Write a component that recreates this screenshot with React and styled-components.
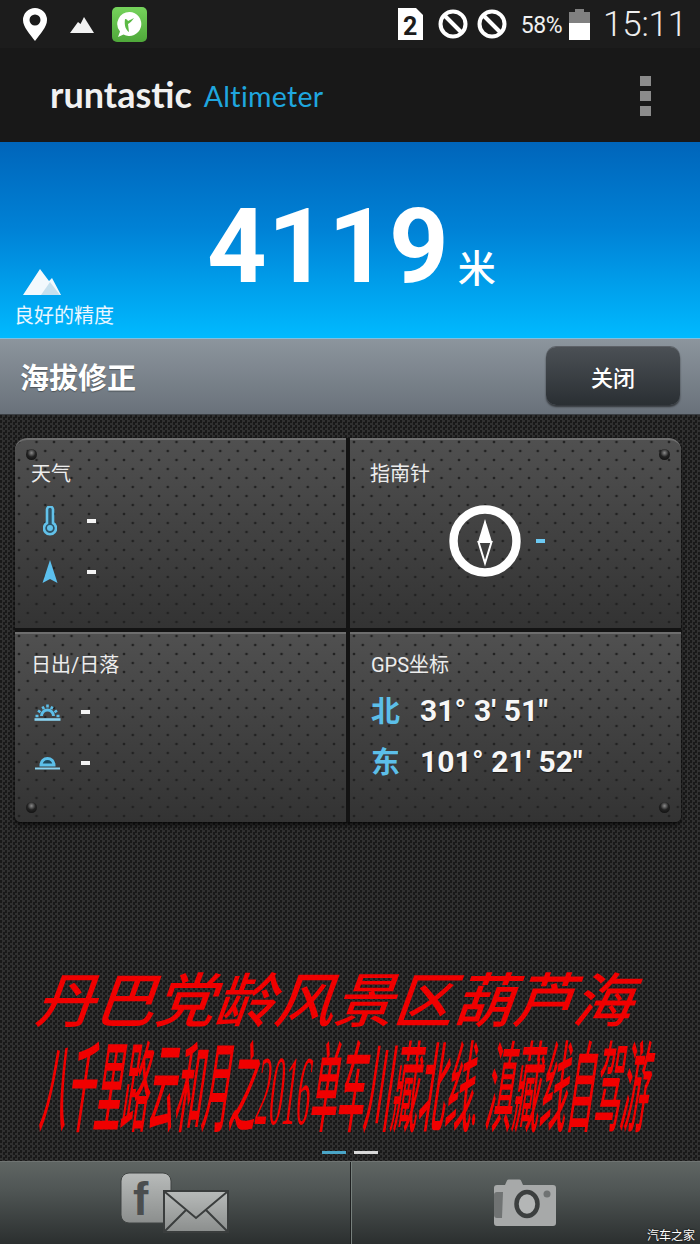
import React from "react";
import styled, { createGlobalStyle } from "styled-components";

const cjk = `"Noto Sans CJK SC", sans-serif`;
const roboto = `Roboto, "Noto Sans CJK SC", sans-serif`;

const GlobalStyle = createGlobalStyle`
  html, body {
    margin: 0;
    padding: 0;
    background: #1a1a1a;
  }
  * {
    box-sizing: border-box;
  }
`;

const Screen = styled.div`
  position: relative;
  width: 700px;
  height: 1244px;
  overflow: hidden;
  display: flex;
  flex-direction: column;
  font-family: ${roboto};
  color: #fff;
`;

/* status bar */
const StatusBar = styled.div`
  height: 48px;
  flex: 0 0 48px;
  background: #1c1c1c;
  display: flex;
  align-items: center;
  padding: 0 13px 0 23px;
`;

const StatusLeft = styled.div`
  display: flex;
  align-items: center;
  flex: 1;
`;

const AppBadge = styled.div`
  width: 35px;
  height: 35px;
  margin: 0 0 0 18px;
  border-radius: 5px;
  background: linear-gradient(#76d35c, #4fa83a);
  display: flex;
  align-items: center;
  justify-content: center;
`;

const Percent = styled.span`
  font-size: 23px;
  letter-spacing: -0.5px;
  margin: 2px 7px 0 14px;
  color: #f0f0f0;
`;

const Clock = styled.span`
  font-size: 35px;
  font-weight: 300;
  margin-left: 13px;
  letter-spacing: -0.2px;
  color: #eee;
`;

const SlashIcon = styled.svg`
  margin-left: ${(p) => p.$gap}px;
`;

/* app bar */
const AppBar = styled.div`
  height: 94px;
  flex: 0 0 94px;
  background: #181818;
  display: flex;
  align-items: center;
  padding: 0 49px 0 50px;
`;

const LogoMain = styled.span`
  font-family: Lato, sans-serif;
  font-weight: 700;
  font-size: 36px;
  letter-spacing: 0;
  color: #f1f1f1;
  line-height: 1;
  margin-top: -2px;
`;

const LogoSub = styled.span`
  font-family: Lato, sans-serif;
  font-weight: 400;
  font-size: 28.5px;
  letter-spacing: 0.3px;
  color: #1fa6df;
  line-height: 1;
  margin: 2px auto 0 12px;
`;

const MenuDots = styled.div`
  display: flex;
  flex-direction: column;
  gap: 5px;
  margin-top: 1px;
`;

const MenuDot = styled.span`
  width: 11px;
  height: 10px;
  background: #8b8b8b;
`;

/* altitude hero */
const Hero = styled.div`
  height: 196px;
  flex: 0 0 196px;
  background: linear-gradient(#0065ba 0%, #0082d6 45%, #00baff 100%);
  display: flex;
  align-items: flex-end;
  padding: 0 0 0 14px;
`;

const Accuracy = styled.div`
  width: 193px;
  display: flex;
  flex-direction: column;
  padding-bottom: 8px;
`;

const AccuracyText = styled.span`
  font-family: ${cjk};
  font-size: 20px;
  line-height: 30px;
  margin-top: 5px;
  color: #e9f6ff;
`;

const Altitude = styled.div`
  display: flex;
  align-items: baseline;
  align-self: flex-start;
  margin-top: 45px;
`;

const AltitudeValue = styled.span`
  font-size: 104px;
  font-weight: 700;
  letter-spacing: 1px;
  line-height: 120px;
`;

const AltitudeUnit = styled.span`
  font-family: ${cjk};
  font-size: 38px;
  font-weight: 500;
  line-height: 1;
  margin-left: 8px;
`;

/* correction bar */
const CorrectionBar = styled.div`
  height: 77px;
  flex: 0 0 77px;
  border-top: 1px solid #7fc0e0;
  border-bottom: 1px solid #3b3f44;
  background: linear-gradient(#8c959d, #69717a);
  display: flex;
  align-items: center;
  justify-content: space-between;
  padding: 0 20px 2px 20px;
`;

const CorrectionTitle = styled.h2`
  margin: 0;
  font-family: ${cjk};
  font-size: 29px;
  font-weight: 700;
  color: #fff;
  text-shadow: 0 1px 1px rgba(0, 0, 0, 0.35);
`;

const CloseButton = styled.div`
  width: 134px;
  height: 58px;
  border-radius: 10px;
  background: linear-gradient(#4b5055, #2a2f33);
  box-shadow: 0 -1px 0 #5d6167, 0 2px 2px rgba(0, 0, 0, 0.55);
  display: flex;
  align-items: center;
  justify-content: center;
  font-family: ${cjk};
  font-size: 22px;
  font-weight: 500;
`;

/* carbon area */
const Carbon = styled.div`
  flex: 1;
  display: flex;
  flex-direction: column;
  align-items: stretch;
  padding: 23px 19px 0 15px;
  background-color: #222;
  background-image: repeating-conic-gradient(#303030 0 25%, #191919 0 50%);
  background-size: 5px 5px;
`;

const PanelGrid = styled.div`
  display: grid;
  grid-template-columns: 331px 331px;
  grid-template-rows: 190px 190px;
  gap: 4px;
  background: #131313;
  border-radius: 12px 12px 6px 6px;
  box-shadow: 0 3px 5px rgba(0, 0, 0, 0.7);
`;

const Panel = styled.div`
  position: relative;
  padding: ${(p) => p.$top}px 0 0 ${(p) => p.$left}px;
  border-top: 2px solid #6e6e6e;
  border-radius: ${(p) => p.$radius};
  background-color: #3c3c3c;
  background-image:
    radial-gradient(circle, #222 1px, transparent 1.7px),
    radial-gradient(circle, #222 1px, transparent 1.7px),
    linear-gradient(#505050, #414141 50%, #333);
  background-size: 17.5px 18px, 17.5px 18px, 100% 100%;
  background-position: 4px 2px, 12.75px 11px, 0 0;
`;

const PanelTitle = styled.div`
  font-size: 20px;
  line-height: 28px;
  color: #ededed;
`;

const Screw = styled.span`
  position: absolute;
  width: 11px;
  height: 11px;
  border-radius: 50%;
  background: radial-gradient(circle at 50% 35%, #8a8a8a 0, #222 45%, #0a0a0a 100%);
  ${(p) => p.$side}: 11px;
  ${(p) => p.$edge}: 9px;
`;

const MetricRow = styled.div`
  height: 51px;
  display: flex;
  align-items: center;
  margin-top: ${(p) => p.$top || 0}px;
`;

const MetricIcon = styled.div`
  width: ${(p) => p.$width}px;
  display: flex;
  justify-content: ${(p) => p.$justify || "center"};
`;

const Dash = styled.span`
  width: 9px;
  height: 4px;
  margin-left: ${(p) => p.$left || 0}px;
  background: ${(p) => p.$color || "#f4f4f4"};
  flex: none;
`;

const CompassWrap = styled.div`
  display: flex;
  align-items: center;
  margin: 17px 0 0 79px;
  gap: 15px;
`;

const CoordLetter = styled.span`
  font-family: ${cjk};
  font-size: 29px;
  font-weight: 700;
  color: #5cbfe9;
  width: 49px;
  margin-top: -4px;
`;

const CoordValue = styled.span`
  font-size: 30px;
  font-weight: 700;
  letter-spacing: 0.1px;
  color: #f7f7f7;
  text-shadow: 0 1px 1px rgba(0, 0, 0, 0.5);
`;

/* red caption */
const Caption = styled.div`
  flex: 1;
  display: flex;
  flex-direction: column;
  margin: 0 -19px 0 -15px;
  padding-top: 151px;
`;

const RedLine = styled.div`
  font-family: "Liberation Serif", "Noto Sans CJK SC", serif;
  font-weight: ${(p) => p.$weight};
  font-style: italic;
  color: #f00000;
  white-space: nowrap;
  transform-origin: left top;
  line-height: 1;
  font-size: ${(p) => p.$size}px;
  height: ${(p) => p.$height}px;
  margin-left: ${(p) => p.$left}px;
  transform: scale(${(p) => p.$scaleX}, ${(p) => p.$scaleY}) skewX(${(p) => p.$skew}deg);
`;

const Pager = styled.div`
  display: flex;
  justify-content: center;
  gap: 8px;
  margin: auto 0 7px -1px;
`;

const PagerDash = styled.span`
  width: 24px;
  height: 3px;
  background: ${(p) => p.$color};
`;

/* bottom bar */
const BottomBar = styled.div`
  height: 83px;
  flex: 0 0 83px;
  display: flex;
  border-top: 1px solid #6f7472;
  background: linear-gradient(#5f6563, #4f5554 35%, #2b2f2f);
`;

const BottomButton = styled.div`
  flex: 1;
  display: flex;
  align-items: center;
  justify-content: center;
  & + & {
    border-left: 1px solid #1d1f1f;
    box-shadow: inset 1px 0 0 #77807d;
  }
`;

const Watermark = styled.span`
  position: absolute;
  right: 5px;
  bottom: 1px;
  font-family: ${cjk};
  font-size: 12px;
  color: #fff;
  text-shadow: 0 0 2px #000;
`;

const BlockedIcon = ({ gap }) => (
  <SlashIcon $gap={gap} width="30" height="30" viewBox="0 0 30 30">
    <circle cx="15" cy="15" r="12.5" fill="none" stroke="#fff" strokeWidth="4" />
    <path d="M6.5 6.5L23.5 23.5" stroke="#fff" strokeWidth="4" />
  </SlashIcon>
);

const Thermometer = () => (
  <svg width="14" height="30" viewBox="0 0 14 30">
    <path d="M4 3.5a3 3 0 0 1 6 0V17a6 6 0 1 1-6 0z" fill="#2f5366" stroke="#62c2ea" strokeWidth="2.6" />
    <circle cx="7" cy="22" r="3" fill="#62c2ea" />
  </svg>
);

const ArrowUp = () => (
  <svg width="16" height="24" viewBox="0 0 16 24">
    <path d="M8 0L15.5 23L8 19L0.5 23z" fill="#5cc0ee" />
  </svg>
);

const Sunrise = () => (
  <svg width="27" height="18" viewBox="0 0 27 18">
    <path d="M7.500 13a6 6 0 0 1 12 0" fill="none" stroke="#5cbfe9" strokeWidth="3" />
    <path
      d="M1.500 13h3M4 7.500l2.500 1.800M8.500 3.500l1.400 2.700M13.500 1.500v3M18.500 3.500l-1.400 2.700M23 7.500l-2.500 1.800M22.500 13h3"
      stroke="#5cbfe9"
      strokeWidth="2.600"
    />
    <path d="M0.500 16.500h26" stroke="#8ad2ef" strokeWidth="2.600" />
  </svg>
);

const Sunset = () => (
  <svg width="25" height="15" viewBox="0 0 25 15">
    <path d="M6 10a6.500 6.500 0 0 1 13 0z" fill="#1f4a5e" stroke="#5cbfe9" strokeWidth="3" />
    <path d="M0 13.500h25" stroke="#8ad2ef" strokeWidth="2" />
  </svg>
);

const Compass = () => (
  <svg width="72" height="72" viewBox="0 0 72 72">
    <circle cx="36" cy="36" r="31.500" fill="none" stroke="#fff" strokeWidth="8.500" />
    <path d="M36 14L43 37H29z" fill="#fff" />
    <path d="M29.500 37H42.500L36 58z" fill="none" stroke="#fff" strokeWidth="2" />
  </svg>
);

const FacebookMail = () => (
  <svg width="110" height="62" viewBox="0 0 110 62">
    <defs>
      <linearGradient id="tile" x1="0" y1="0" x2="0" y2="1">
        <stop offset="0" stopColor="#b8bbba" />
        <stop offset="1" stopColor="#8b8e8d" />
      </linearGradient>
    </defs>
    <rect x="1" y="1" width="50" height="50" rx="8" fill="url(#tile)" stroke="#3f4342" />
    <text x="13" y="43" fontFamily="Liberation Sans" fontWeight="700" fontSize="46" fill="#4b4e4f">
      f
    </text>
    <rect x="44" y="19" width="64" height="41" fill="url(#tile)" stroke="#3a3d3d" strokeWidth="2" />
    <path d="M45 20L76 46L107 20M45 59L66 38M107 59L86 38" fill="none" stroke="#3a3d3d" strokeWidth="2" />
  </svg>
);

const Camera = () => (
  <svg width="64" height="48" viewBox="0 0 64 48">
    <path
      d="M4 6h8l2-4.500a2 2 0 0 1 2-1h10a2 2 0 0 1 2 1L30 6h30a3 3 0 0 1 3 3v35a3 3 0 0 1-3 3H4a3 3 0 0 1-3-3V9a3 3 0 0 1 3-3z"
      fill="#a7a9a9"
    />
    <path d="M4 13h6l-1 26H4a3 3 0 0 1-3-3V16a3 3 0 0 1 3-3z" fill="#707373" />
    <ellipse cx="34" cy="25" rx="10.500" ry="12" fill="#b4b6b6" stroke="#3c3f3f" strokeWidth="4.500" />
    <circle cx="54" cy="15" r="3.500" fill="#707373" />
  </svg>
);

export default function App() {
  return (
    <Screen>
      <GlobalStyle />
      <StatusBar>
        <StatusLeft>
          <svg width="24" height="33" viewBox="0 0 24 33">
            <path
              fillRule="evenodd"
              d="M12 0a12 12 0 0 1 12 12c0 7-7 14-12 21C7 26 0 19 0 12A12 12 0 0 1 12 0zm0 6.500a5.500 5.500 0 1 0 0 11 5.500 5.500 0 0 0 0-11z"
              fill="#fff"
            />
          </svg>
          <svg width="24" height="16" viewBox="0 0 24 16" style={{ marginLeft: 23, marginTop: 1 }}>
            <path d="M0 16L8 5L10.500 7L14 0L24 16z" fill="#f2f2f2" />
          </svg>
          <AppBadge>
            <svg width="27" height="27" viewBox="0 0 27 27">
              <path d="M13.500 1a12 12 0 1 1-6 22.500L2 26l2-5.500A12 12 0 0 1 13.500 1z" fill="#fff" />
              <path d="M9 8a3 3 0 0 1 3 2l6-3c-2 3-4 5-6 6l1 8c-3-2-5-6-4-13z" fill="#5bb944" />
            </svg>
          </AppBadge>
        </StatusLeft>
        <svg width="25" height="32" viewBox="0 0 25 32">
          <path d="M0 0H18L25 7V32H0z" fill="#fff" />
          <text x="5" y="27" fontFamily="Roboto" fontWeight="700" fontSize="25" fill="#1c1c1c">
            2
          </text>
        </svg>
        <BlockedIcon gap={15} />
        <BlockedIcon gap={9} />
        <Percent>58%</Percent>
        <svg width="21" height="31" viewBox="0 0 21 31">
          <path d="M6 0h9v3h6v11H0V3h6z" fill="#808080" />
          <rect y="14" width="21" height="17" fill="#fff" />
        </svg>
        <Clock>15:11</Clock>
      </StatusBar>

      <AppBar>
        <LogoMain>runtastic</LogoMain>
        <LogoSub>Altimeter</LogoSub>
        <MenuDots>
          <MenuDot />
          <MenuDot />
          <MenuDot />
        </MenuDots>
      </AppBar>

      <Hero>
        <Accuracy>
          <svg width="38" height="26" viewBox="0 0 38 26" style={{ marginLeft: 9 }}>
            <path d="M0 26L17 0L26 12L29 9L38 26z" fill="#f3f9fd" />
            <path d="M18 26L27 13L37 26z" fill="#c6e0ee" />
          </svg>
          <AccuracyText>良好的精度</AccuracyText>
        </Accuracy>
        <Altitude>
          <AltitudeValue>4119</AltitudeValue>
          <AltitudeUnit>米</AltitudeUnit>
        </Altitude>
      </Hero>

      <CorrectionBar>
        <CorrectionTitle>海拔修正</CorrectionTitle>
        <CloseButton>关闭</CloseButton>
      </CorrectionBar>

      <Carbon>
        <PanelGrid>
          <Panel $top={20} $left={16} $radius="12px 0 0 0">
            <Screw $side="left" $edge="top" />
            <PanelTitle>天气</PanelTitle>
            <MetricRow $top={7}>
              <MetricIcon $width={37}>
                <Thermometer />
              </MetricIcon>
              <Dash $left={19} />
            </MetricRow>
            <MetricRow>
              <MetricIcon $width={37}>
                <ArrowUp />
              </MetricIcon>
              <Dash $left={19} />
            </MetricRow>
          </Panel>
          <Panel $top={20} $left={20} $radius="0 12px 0 0">
            <Screw $side="right" $edge="top" />
            <PanelTitle>指南针</PanelTitle>
            <CompassWrap>
              <Compass />
              <Dash $color="#6cc9f2" />
            </CompassWrap>
          </Panel>
          <Panel $top={17} $left={16} $radius="0 0 0 6px">
            <Screw $side="left" $edge="bottom" />
            <PanelTitle>日出/日落</PanelTitle>
            <MetricRow $top={7}>
              <MetricIcon $width={30} $justify="flex-end">
                <Sunrise />
              </MetricIcon>
              <Dash $left={20} />
            </MetricRow>
            <MetricRow>
              <MetricIcon $width={29} $justify="flex-end">
                <Sunset />
              </MetricIcon>
              <Dash $left={21} />
            </MetricRow>
          </Panel>
          <Panel $top={17} $left={21} $radius="0 0 6px 0">
            <Screw $side="right" $edge="bottom" />
            <PanelTitle>GPS坐标</PanelTitle>
            <MetricRow $top={6}>
              <CoordLetter>北</CoordLetter>
              <CoordValue>31° 3' 51"</CoordValue>
            </MetricRow>
            <MetricRow>
              <CoordLetter>东</CoordLetter>
              <CoordValue>101° 21' 52"</CoordValue>
            </MetricRow>
          </Panel>
        </PanelGrid>

        <Caption>
          <RedLine $size={60} $height={68} $left={39} $weight={500} $scaleX={0.995} $scaleY={0.98} $skew={-6}>
            丹巴党龄风景区葫芦海
          </RedLine>
          <RedLine $size={90} $height={60} $left={45} $weight={500} $scaleX={0.3} $scaleY={1.1} $skew={-16}>
            八千里路云和月之2016单车川藏北线. 滇藏线自驾游
          </RedLine>
          <Pager>
            <PagerDash $color="#4aa6c8" />
            <PagerDash $color="#d8d8d8" />
          </Pager>
        </Caption>
      </Carbon>

      <BottomBar>
        <BottomButton>
          <FacebookMail />
        </BottomButton>
        <BottomButton>
          <Camera />
        </BottomButton>
      </BottomBar>
      <Watermark>汽车之家</Watermark>
    </Screen>
  );
}
